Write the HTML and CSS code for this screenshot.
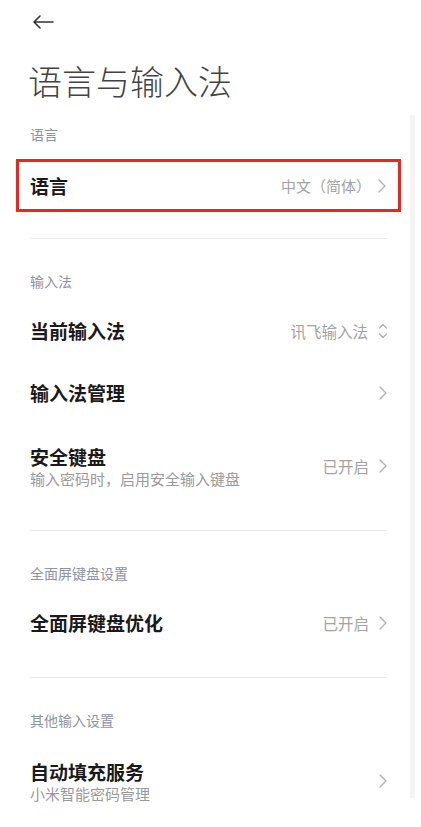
FILE: index.html
```html
<!DOCTYPE html>
<html lang="zh-CN">
<head>
<meta charset="utf-8">
<title>语言与输入法</title>
<link rel="stylesheet" href="styles.css">
</head>
<body>
<div class="page">
  <div class="topbar">
    <svg class="back" width="22" height="14" viewBox="0 0 22 14"><path d="M21 7H2M8 1L2 7l6 6" fill="none" stroke="#333" stroke-width="1.6" stroke-linecap="round" stroke-linejoin="round"/></svg>
  </div>
  <h1 class="title">语言与输入法</h1>

  <section class="section first">
    <div class="header">语言</div>
    <div class="row boxed">
      <div class="label"><div class="name">语言</div></div>
      <div class="value tight">中文（简体）</div>
      <svg class="chev" width="8" height="14" viewBox="0 0 8 14"><path d="M1 1l6 6-6 6" fill="none" stroke="#b0b0b0" stroke-width="1.3" stroke-linecap="round" stroke-linejoin="round"/></svg>
    </div>
  </section>
  <div class="divider d1"></div>

  <section class="section">
    <div class="header">输入法</div>
    <div class="row">
      <div class="label"><div class="name">当前输入法</div></div>
      <div class="value">讯飞输入法</div>
      <svg class="chev updown" width="10" height="18" viewBox="0 0 10 18"><path d="M1.5 6L5 2.5 8.5 6M1.5 12L5 15.5 8.5 12" fill="none" stroke="#b0b0b0" stroke-width="1.3" stroke-linecap="round" stroke-linejoin="round"/></svg>
    </div>
    <div class="row">
      <div class="label"><div class="name">输入法管理</div></div>
      <svg class="chev" width="8" height="14" viewBox="0 0 8 14"><path d="M1 1l6 6-6 6" fill="none" stroke="#b0b0b0" stroke-width="1.3" stroke-linecap="round" stroke-linejoin="round"/></svg>
    </div>
    <div class="row two">
      <div class="label"><div class="name">安全键盘</div><div class="sub">输入密码时，启用安全输入键盘</div></div>
      <div class="value">已开启</div>
      <svg class="chev" width="8" height="14" viewBox="0 0 8 14"><path d="M1 1l6 6-6 6" fill="none" stroke="#b0b0b0" stroke-width="1.3" stroke-linecap="round" stroke-linejoin="round"/></svg>
    </div>
  </section>
  <div class="divider d2"></div>

  <section class="section">
    <div class="header">全面屏键盘设置</div>
    <div class="row">
      <div class="label"><div class="name">全面屏键盘优化</div></div>
      <div class="value">已开启</div>
      <svg class="chev" width="8" height="14" viewBox="0 0 8 14"><path d="M1 1l6 6-6 6" fill="none" stroke="#b0b0b0" stroke-width="1.3" stroke-linecap="round" stroke-linejoin="round"/></svg>
    </div>
  </section>
  <div class="divider"></div>

  <section class="section">
    <div class="header">其他输入设置</div>
    <div class="row two">
      <div class="label"><div class="name">自动填充服务</div><div class="sub">小米智能密码管理</div></div>
      <svg class="chev" width="8" height="14" viewBox="0 0 8 14"><path d="M1 1l6 6-6 6" fill="none" stroke="#b0b0b0" stroke-width="1.3" stroke-linecap="round" stroke-linejoin="round"/></svg>
    </div>
  </section>

  <div class="scrolltrack"></div>
</div>
</body>
</html>
```

FILE: styles.css
```css
* { box-sizing: border-box; }
html, body { margin: 0; padding: 0; background: #fff; }
body {
  font-family: "Noto Sans CJK SC", "Noto Sans", sans-serif;
  color: #1a1a1a;
}
.page {
  position: relative;
  width: 421px;
  min-height: 827px;
  padding: 0 34px 0 30px;
  overflow: hidden;
}
.topbar {
  height: 44px;
  display: flex;
  align-items: center;
  padding-left: 2px;
}
.back { display: block; }
.title {
  margin: 15px 0 0 -2px;
  height: 44px;
  line-height: 44px;
  font-size: 34px;
  font-weight: 300;
  color: #444;
  letter-spacing: 0;
}
.section { display: flex; flex-direction: column; }
.header {
  height: 20px;
  line-height: 20px;
  font-size: 14px;
  color: #8c93a3;
  margin-bottom: 9px;
}
.section.first .header { margin-top: 21px; }
.row {
  height: 62px;
  display: flex;
  align-items: center;
  gap: 10px;
}
.row.two { height: 84px; }
.row.two .label { padding-top: 2px; }
.row.boxed {
  height: 53px;
  margin: 6px -14px 0 -14px;
  padding: 0 12px 0 11px;
  border: 3px solid #f2231a;
}
.label { flex: 1; min-width: 0; }
.name {
  font-size: 19px;
  line-height: 24px;
  font-weight: 700;
  color: #1a1a1a;
}
.sub {
  font-size: 15px;
  line-height: 20px;
  color: #9a9a9a;
}
.value {
  font-size: 15.5px;
  color: #a3a3a3;
}
.value.tight { font-size: 15px; margin-right: -3px; }
.chev { display: block; flex: none; }
.chev.updown { margin-right: -1px; }
.divider {
  height: 1px;
  background: #ebebeb;
  margin: 23px 0 32px;
}
.divider.d1 { margin-top: 26px; }
.divider.d2 { margin-top: 22px; }
.scrolltrack {
  position: absolute;
  left: 410px;
  top: 115px;
  width: 5px;
  height: 683px;
  background: #f4f4f4;
}
```
